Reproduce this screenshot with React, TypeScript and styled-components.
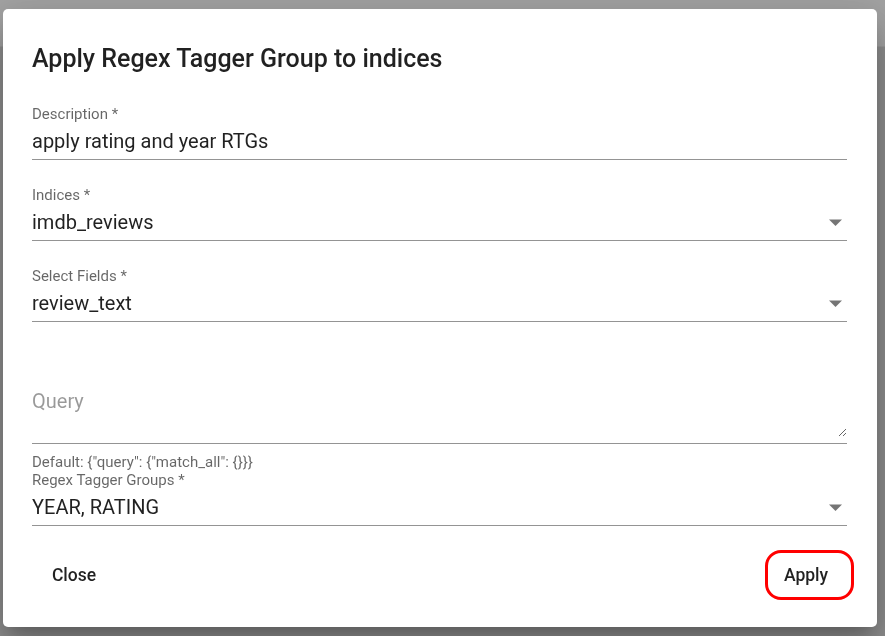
import React from "react";
import styled, { createGlobalStyle } from "styled-components";

const Global = createGlobalStyle`
  html, body { margin: 0; padding: 0; }
  body {
    font-family: Roboto, "Liberation Sans", sans-serif;
    background: #8e8e8e;
    overflow: hidden;
  }
  * { box-sizing: border-box; }
`;

const Page = styled.div`
  width: 885px;
  height: 636px;
  background: #8e8e8e;
`;

const TopBar = styled.header`
  height: 47px;
  background: #a3a3a3;
  border-bottom: 1px solid #999999;
`;

const Modal = styled.div`
  position: fixed;
  inset: 0;
  display: flex;
  align-items: flex-start;
  padding: 9px 8px 9px 3px;
`;

const Dialog = styled.div`
  width: 874px;
  height: 618px;
  background: #ffffff;
  border-radius: 5px;
  box-shadow: 0px 11px 15px -7px rgba(0, 0, 0, 0.2),
    0px 24px 38px 3px rgba(0, 0, 0, 0.14), 0px 9px 46px 8px rgba(0, 0, 0, 0.12);
  display: flex;
  flex-direction: column;
`;

const Content = styled.div`
  padding: 34.5px 30px 0 29px;
  display: flex;
  flex-direction: column;
`;

const Title = styled.h2`
  margin: 0 0 29.5px;
  font-size: 25px;
  line-height: 30px;
  font-weight: 500;
  color: rgba(0, 0, 0, 0.87);
`;

const Field = styled.div<{ $gap: number }>`
  display: flex;
  flex-direction: column;
  margin-top: ${(p) => p.$gap}px;
`;

const Label = styled.label`
  margin-top: 2px;
  font-size: 15px;
  line-height: 18px;
  height: 18px;
  color: rgba(0, 0, 0, 0.6);
`;

const ValueRow = styled.div`
  display: flex;
  align-items: center;
  margin-top: 6px;
  padding-bottom: 6px;
  border-bottom: 1px solid rgba(0, 0, 0, 0.42);
`;

const Value = styled.div`
  flex: 1;
  font-size: 20px;
  line-height: 24px;
  color: rgba(0, 0, 0, 0.87);
  white-space: nowrap;
`;

const ArrowIcon = styled.svg`
  width: 13px;
  height: 7px;
  margin-right: 5px;
  flex: none;
`;

const QueryBox = styled.div`
  margin-top: 67px;
  padding-bottom: 6px;
  border-bottom: 1px solid rgba(0, 0, 0, 0.42);
`;

const QueryArea = styled.textarea`
  display: block;
  width: 100%;
  height: 48px;
  margin: 0;
  padding: 0;
  border: none;
  outline: none;
  resize: vertical;
  font-family: Roboto, "Liberation Sans", sans-serif;
  font-size: 20px;
  line-height: 24px;
  color: rgba(0, 0, 0, 0.87);
  background: transparent;
  &::placeholder {
    color: rgba(0, 0, 0, 0.4);
    opacity: 1;
  }
`;

const Helper = styled.p`
  margin: 9px 0 0;
  font-size: 15px;
  line-height: 18px;
  color: rgba(0, 0, 0, 0.6);
`;

const Actions = styled.div`
  margin-top: 16px;
  padding: 10px 31px;
  display: flex;
  justify-content: space-between;
  align-items: center;
`;

const Button = styled.button<{ $marked?: boolean }>`
  position: relative;
  min-width: 80px;
  padding: 7.5px 10px;
  border: none;
  background: transparent;
  border-radius: 5px;
  font-family: Roboto, "Liberation Sans", sans-serif;
  font-size: 17.5px;
  line-height: 30.6px;
  font-weight: 500;
  color: rgba(0, 0, 0, 0.87);
  cursor: pointer;
  ${(p) =>
    p.$marked &&
    `
    &::after {
      content: "";
      position: absolute;
      top: -2px;
      bottom: -2px;
      left: -1px;
      right: -8px;
      border: 3.5px solid #ff0000;
      border-radius: 16px;
      pointer-events: none;
    }
  `}
`;

const Arrow = () => (
  <ArrowIcon viewBox="0 0 13 7">
    <path d="M0 0.5 L13 0.5 L6.5 7 Z" fill="rgba(0,0,0,0.54)" />
  </ArrowIcon>
);

type FieldProps = { label: string; value: string; gap: number; select?: boolean };

const TextField = ({ label, value, gap, select }: FieldProps) => (
  <Field $gap={gap}>
    <Label>{label}</Label>
    <ValueRow>
      <Value>{value}</Value>
      {select && <Arrow />}
    </ValueRow>
  </Field>
);

export default function App() {
  return (
    <>
      <Global />
      <Page>
        <TopBar />
      </Page>
      <Modal>
        <Dialog>
          <Content>
            <Title>Apply Regex Tagger Group to indices</Title>
            <TextField label="Description *" value="apply rating and year RTGs" gap={0} />
            <TextField label="Indices *" value="imdb_reviews" gap={24} select />
            <TextField label="Select Fields *" value="review_text" gap={24} select />
            <QueryBox>
              <QueryArea placeholder="Query" rows={2} />
            </QueryBox>
            <Helper>Default: {'{"query": {"match_all": {}}}'}</Helper>
            <TextField label="Regex Tagger Groups *" value="YEAR, RATING" gap={-2} select />
          </Content>
          <Actions>
            <Button>Close</Button>
            <Button $marked>Apply</Button>
          </Actions>
        </Dialog>
      </Modal>
    </>
  );
}
